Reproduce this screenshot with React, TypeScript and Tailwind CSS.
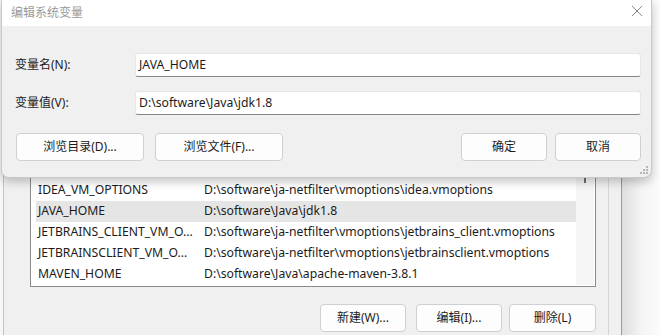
const font = { fontFamily: '"Noto Sans", "Noto Sans CJK SC", sans-serif' };

const rows = [
  { name: 'CLASSPATH', value: '.;%JAVA_HOME%\\lib', active: false },
  { name: 'IDEA_VM_OPTIONS', value: 'D:\\software\\ja-netfilter\\vmoptions\\idea.vmoptions', active: false },
  { name: 'JAVA_HOME', value: 'D:\\software\\Java\\jdk1.8', active: true },
  { name: 'JETBRAINS_CLIENT_VM_O...', value: 'D:\\software\\ja-netfilter\\vmoptions\\jetbrains_client.vmoptions', active: false },
  { name: 'JETBRAINSCLIENT_VM_O...', value: 'D:\\software\\ja-netfilter\\vmoptions\\jetbrainsclient.vmoptions', active: false },
  { name: 'MAVEN_HOME', value: 'D:\\software\\Java\\apache-maven-3.8.1', active: false },
];

function WinButton({ label, className }: { label: string; className: string }) {
  return (
    <div
      className={`flex items-center justify-center h-[28px] rounded-[4px] border border-[#d0d0d0] bg-[#fdfdfd] text-[12px] text-[#1b1b1b] ${className}`}
    >
      {label}
    </div>
  );
}

function Field({ label, value }: { label: string; value: string }) {
  return (
    <div className="flex items-center">
      <div className="w-[133px] pl-[13px] text-[12px] text-[#1b1b1b]">{label}</div>
      <div className="flex items-center w-[506px] h-[24px] bg-white border border-[#e6e6e6] border-b-[#868686] rounded-[3px] pl-[3px] text-[12.2px] text-[#1b1b1b]">
        {value}
      </div>
    </div>
  );
}

export default function App() {
  return (
    <div className="relative w-[660px] h-[335px] overflow-hidden bg-[#f0f0f0]" style={font}>
      {/* window behind */}
      <div className="flex h-full">
        <div className="w-[3px] bg-[#f7f7f7]" />
        <div className="w-px bg-[#c4c4c4]" />
        <div className="flex-1 flex flex-col pl-[26px] pr-[12px] pt-[157px]">
          <div className="flex w-[566px] h-[130px] bg-white border border-[#8a8a8a] p-px">
            <div className="flex-1 pl-[4px]">
              {rows.map((r) => (
                <div
                  key={r.name}
                  className={`flex items-center h-[21px] text-[12.2px] text-[#1b1b1b] ${r.active ? 'bg-[#e5e5e5]' : ''}`}
                >
                  <div className="w-[168px] pl-[2px] whitespace-nowrap overflow-hidden">{r.name}</div>
                  <div className="whitespace-nowrap">{r.value}</div>
                </div>
              ))}
            </div>
            <div className="w-[18px] bg-[#f6f6f6] flex justify-center">
              <div className="w-[2px] h-[24px] bg-[#6e6e6e]" />
            </div>
          </div>
          <div className="flex mt-[17px] pl-[290px]">
            <WinButton label="新建(W)..." className="w-[86px]" />
            <WinButton label="编辑(I)..." className="w-[86px] ml-[10px]" />
            <WinButton label="删除(L)" className="w-[87px] ml-[7px]" />
          </div>
        </div>
        <div className="w-px bg-[#d6d6d6]" />
        <div className="w-[12px] bg-[#f0f0f0]" />
        <div className="w-px bg-[#9c9c9c]" />
        <div className="flex-1 bg-gradient-to-r from-[#dedede] via-[#f4f4f4] to-[#fbfbfb]" />
      </div>

      {/* dialog */}
      <div className="absolute left-[1px] top-0 w-[651px] h-[178px] flex flex-col bg-[#f0f0f0] border border-t-0 border-[#c9c9c9] rounded-b-[8px] shadow-[0_4px_10px_rgba(0,0,0,0.22)]">
        <div className="flex items-center justify-between h-[26px] bg-white pl-[9px] pr-[8px]">
          <span className="text-[12px] text-[#9a9a9a]">编辑系统变量</span>
          <svg width="12" height="12" viewBox="0 0 12 12" className="mb-[4px]">
            <path d="M1 1L11 11M11 1L1 11" stroke="#8a8a8a" strokeWidth="1" />
          </svg>
        </div>
        <div className="flex flex-col gap-[14px] pt-[27px]">
          <Field label="变量名(N):" value="JAVA_HOME" />
          <Field label="变量值(V):" value="D:\software\Java\jdk1.8" />
        </div>
        <div className="flex items-center mt-[18px] pl-[14px]">
          <WinButton label="浏览目录(D)..." className="w-[128px]" />
          <WinButton label="浏览文件(F)..." className="w-[128px] ml-[11px]" />
          <WinButton label="确定" className="w-[86px] ml-[178px]" />
          <WinButton label="取消" className="w-[86px] ml-[8px]" />
        </div>
        <svg width="8" height="8" viewBox="0 0 8 8" className="absolute right-[3px] bottom-[3px]">
          <rect x="6" y="0" width="2" height="2" fill="#b5b5b5" />
          <rect x="3" y="3" width="2" height="2" fill="#b5b5b5" />
          <rect x="6" y="3" width="2" height="2" fill="#b5b5b5" />
          <rect x="0" y="6" width="2" height="2" fill="#b5b5b5" />
          <rect x="3" y="6" width="2" height="2" fill="#b5b5b5" />
          <rect x="6" y="6" width="2" height="2" fill="#b5b5b5" />
        </svg>
      </div>
    </div>
  );
}
